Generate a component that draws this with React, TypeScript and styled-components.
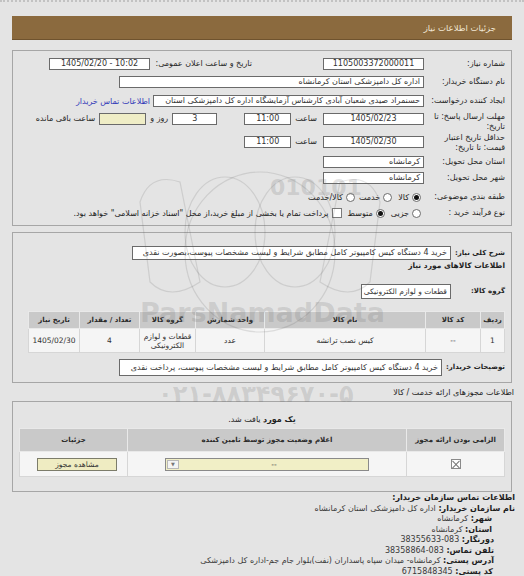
import React from 'react';
import styled, { createGlobalStyle } from 'styled-components';

const GlobalStyle = createGlobalStyle`
  html, body {
    margin: 0;
    padding: 0;
    background: #e4e4e4;
  }
  body {
    font-family: "DejaVu Sans", sans-serif;
    font-size: 8px;
    color: #222;
  }
`;

const Page = styled.div`
  position: relative;
  direction: rtl;
  width: 524px;
  height: 576px;
  overflow: hidden;
  box-sizing: border-box;
  padding: 0 12px;
  border-top: 2px dotted #c2c2c2;
`;

const HeaderBar = styled.div`
  margin-top: 14px;
  height: 24px;
  box-sizing: border-box;
  background: #8b6a3e;
  border-bottom: 1px solid #6f532e;
  color: #f1e7d4;
  font-size: 8.5px;
  display: flex;
  align-items: center;
  padding-right: 16px;
`;

const Panel = styled.div<{ $mt: number; $pt: number; $pb: number }>`
  margin-top: ${p => p.$mt}px;
  border: 1px solid #a6a6a6;
  padding: ${p => p.$pt}px 6px ${p => p.$pb}px 6px;
`;

const Row = styled.div<{ $h: number; $mt?: number; $top?: boolean }>`
  display: flex;
  align-items: ${p => (p.$top ? 'flex-start' : 'center')};
  height: ${p => p.$h}px;
  margin-top: ${p => p.$mt ?? 0}px;
`;

const Label = styled.div<{ $w?: number; $ms?: number; $pt?: number }>`
  flex: 0 0 ${p => (p.$w ? `${p.$w}px` : 'auto')};
  min-width: 0;
  margin-right: ${p => p.$ms ?? 0}px;
  padding-top: ${p => p.$pt ?? 0}px;
  line-height: 9.5px;
  white-space: nowrap;
  color: #262626;
`;

const BoldLabel = styled.div<{ $gap: number }>`
  flex: 0 0 auto;
  margin-left: ${p => p.$gap}px;
  font-weight: 700;
  font-size: 7px;
  white-space: nowrap;
  color: #1f1f1f;
`;

const Field = styled.div<{ $w?: number; $ms?: number; $ml?: number; $tint?: boolean; $ltr?: boolean; $right?: boolean; $h?: number; $mt?: number; $fs?: number }>`
  box-sizing: border-box;
  flex: ${p => (p.$w ? `0 0 ${p.$w}px` : '1 1 auto')};
  min-width: 0;
  height: ${p => p.$h ?? 12}px;
  margin-right: ${p => p.$ms ?? 0}px;
  margin-left: ${p => p.$ml ?? 0}px;
  margin-top: ${p => p.$mt ?? 0}px;
  border: 1px solid #6a6a6a;
  background: ${p => (p.$tint ? '#efedc6' : '#fff')};
  font-size: ${p => p.$fs ?? 8}px;
  line-height: ${p => (p.$h ?? 12) - 2}px;
  text-align: ${p => (p.$right ? 'right' : 'center')};
  direction: ${p => (p.$ltr ? 'ltr' : 'rtl')};
  padding: 0 3px;
  overflow: hidden;
  white-space: nowrap;
  color: #333;
`;

const LinkText = styled.a`
  margin-right: 3px;
  color: #3138b8;
  text-decoration: none;
  white-space: nowrap;
`;

const Choice = styled.label<{ $ms?: number }>`
  display: flex;
  align-items: center;
  gap: 3px;
  margin-right: ${p => p.$ms ?? 0}px;
  white-space: nowrap;
`;

const Radio = styled.span<{ $on?: boolean }>`
  box-sizing: border-box;
  width: 9px;
  height: 9px;
  border-radius: 50%;
  border: 1px solid #6c6c6c;
  background: #fff;
  display: inline-flex;
  align-items: center;
  justify-content: center;
  &::after {
    content: '';
    width: 5px;
    height: 5px;
    border-radius: 50%;
    background: ${p => (p.$on ? '#111' : 'transparent')};
  }
`;

const Check = styled.span`
  box-sizing: border-box;
  width: 10px;
  height: 10px;
  border: 1px solid #7a7a7a;
  background: #fff;
`;

const SectionTitle = styled.div<{ $h: number; $mt?: number; $bold?: boolean; $center?: boolean }>`
  height: ${p => p.$h}px;
  line-height: ${p => p.$h}px;
  margin-top: ${p => p.$mt ?? 0}px;
  font-weight: ${p => (p.$bold ? 700 : 400)};
  font-size: ${p => (p.$bold ? 7.5 : 8)}px;
  text-align: ${p => (p.$center ? 'center' : 'right')};
  white-space: nowrap;
`;

const OuterTitle = styled(SectionTitle)`
  margin-right: -2px;
`;

const Table = styled.table<{ $mt: number; $ml: number }>`
  border-collapse: collapse;
  margin-top: ${p => p.$mt}px;
  margin-left: ${p => p.$ml}px;
  width: calc(100% - ${p => p.$ml}px);
  table-layout: fixed;
  border: 1px solid #d6d6d6;
`;

const Th = styled.th<{ $w?: number; $h: number }>`
  width: ${p => (p.$w ? `${p.$w}px` : 'auto')};
  height: ${p => p.$h}px;
  padding: 0;
  background: #c9c9c9;
  border: 1px solid #e9e9e9;
  font-weight: 700;
  font-size: 7px;
  color: #2a2a2a;
  white-space: nowrap;
`;

const Td = styled.td<{ $h: number }>`
  height: ${p => p.$h}px;
  padding: 0 2px;
  background: #f5f5f5;
  border: 1px solid #d6d6d6;
  text-align: center;
  font-size: 7.5px;
  line-height: 9px;
  color: #333;
`;

const XBox = styled.span`
  display: inline-block;
  position: relative;
  width: 10px;
  height: 10px;
  box-sizing: border-box;
  border: 1px solid #8a8a8a;
  background: #fff;
  vertical-align: middle;
  &::before, &::after {
    content: '';
    position: absolute;
    left: -1px;
    top: 3.5px;
    width: 10px;
    height: 1px;
    background: #777;
    transform: rotate(45deg);
  }
  &::after {
    transform: rotate(-45deg);
  }
`;

const SelectBox = styled.div`
  display: flex;
  margin: 0 auto;
  width: 204px;
  height: 13px;
  box-sizing: border-box;
  border: 1px solid #8a8a8a;
  background: #f1efc6;
  direction: ltr;
`;

const SelectArrow = styled.span`
  flex: 0 0 10px;
  margin: 1px;
  border: 1px solid #b9b9b9;
  background: #f4f4f4;
  color: #777;
  font-size: 5px;
  display: flex;
  align-items: center;
  justify-content: center;
`;

const SelectValue = styled.span`
  flex: 1;
  text-align: center;
  line-height: 11px;
`;

const YellowButton = styled.div`
  margin: 0 auto 0 15px;
  width: 80px;
  height: 13px;
  line-height: 11px;
  box-sizing: border-box;
  border: 1px solid #7c7c6a;
  background: #efecc2;
  text-align: center;
  color: #333;
`;

const Footer = styled.div`
  margin-top: 1px;
  margin-right: -3px;
  line-height: 10.5px;
  color: #3a3a3a;
  b {
    color: #1e1e1e;
  }
`;

const FooterLine = styled.div<{ $indent?: number }>`
  padding-right: ${p => p.$indent ?? 0}px;
  white-space: nowrap;
`;

const Watermark = styled.div<{ $top: number; $left: number; $size: number }>`
  position: absolute;
  top: ${p => p.$top}px;
  left: ${p => p.$left}px;
  font-family: "DejaVu Sans", sans-serif;
  font-weight: 700;
  font-size: ${p => p.$size}px;
  color: rgba(110, 110, 110, 0.2);
  direction: ltr;
  pointer-events: none;
  white-space: nowrap;
`;

const LogoMark = styled.svg`
  position: absolute;
  top: 160px;
  left: 120px;
  pointer-events: none;
`;

export default function App() {
  return (
    <>
      <GlobalStyle />
      <Page>
        <HeaderBar>جزئیات اطلاعات نیاز</HeaderBar>

        <Panel $mt={10} $pt={6} $pb={5}>
          <Row $h={14}>
            <Label $w={81}>شماره نیاز:</Label>
            <Field $w={101} $ltr>1105003372000011</Field>
            <Label $w={99} $ms={71}>تاریخ و ساعت اعلان عمومی:</Label>
            <Field $w={101} $ms={3} $ltr>1405/02/20 - 10:02</Field>
          </Row>
          <Row $h={14} $mt={4}>
            <Label $w={81}>نام دستگاه خریدار:</Label>
            <Field $w={305} $right>اداره کل دامپزشکی استان کرمانشاه</Field>
          </Row>
          <Row $h={14} $mt={5}>
            <Label $w={81}>ایجاد کننده درخواست:</Label>
            <Field $w={271} $right>حسنمراد صیدی شعبان آبادی کارشناس آزمایشگاه اداره کل دامپزشکی استان</Field>
            <LinkText href="#">اطلاعات تماس خریدار</LinkText>
          </Row>
          <Row $h={20} $mt={3} $top>
            <Label $w={81} $pt={1}>مهلت ارسال پاسخ: تا<br />تاریخ:</Label>
            <Field $w={101} $mt={2} $ltr>1405/02/23</Field>
            <Label $ms={6} $pt={3}>ساعت</Label>
            <Field $w={47} $ms={4} $mt={2} $ltr>11:00</Field>
            <Field $w={45} $ms={27} $mt={2}>3</Field>
            <Label $ms={4} $pt={3}>روز و</Label>
            <Field $w={47} $ms={4} $mt={2} $tint />
            <Label $ms={4} $pt={3}>ساعت باقی مانده</Label>
          </Row>
          <Row $h={19} $mt={2} $top>
            <Label $w={81}>حداقل تاریخ اعتبار<br />قیمت: تا تاریخ:</Label>
            <Field $w={101} $mt={3} $ltr>1405/02/30</Field>
            <Label $ms={6} $pt={4}>ساعت</Label>
            <Field $w={47} $ms={4} $mt={3} $ltr>11:00</Field>
          </Row>
          <Row $h={14} $mt={3}>
            <Label $w={81}>استان محل تحویل:</Label>
            <Field $w={101} $right>کرمانشاه</Field>
          </Row>
          <Row $h={14} $mt={2}>
            <Label $w={81}>شهر محل تحویل:</Label>
            <Field $w={101} $right>کرمانشاه</Field>
          </Row>
          <Row $h={14} $mt={5}>
            <Label $w={84}>طبقه بندی موضوعی:</Label>
            <Choice><Radio $on />کالا</Choice>
            <Choice $ms={6}><Radio />خدمت</Choice>
            <Choice $ms={4}><Radio />کالا/خدمت</Choice>
          </Row>
          <Row $h={14} $mt={2}>
            <Label $w={84}>نوع فرآیند خرید :</Label>
            <Choice><Radio />جزیی</Choice>
            <Choice $ms={6}><Radio $on />متوسط</Choice>
            <Choice $ms={6}><Check />پرداخت تمام یا بخشی از مبلغ خرید،از محل "اسناد خزانه اسلامی" خواهد بود.</Choice>
          </Row>
        </Panel>

        <Panel $mt={6} $pt={13} $pb={6}>
          <Row $h={14}>
            <BoldLabel $gap={4}>شرح کلی نیاز:</BoldLabel>
            <Field $right $h={14} $ml={113}>خرید 4 دستگاه کیس کامپیوتر کامل مطابق شرایط و لیست مشخصات پیوست،بصورت نقدی</Field>
          </Row>
          <SectionTitle $h={12} $bold>اطلاعات کالاهای مورد نیاز</SectionTitle>
          <Row $h={16} $mt={11}>
            <BoldLabel $gap={20}>گروه کالا:</BoldLabel>
            <Field $w={90} $right $h={15} $fs={7.5}>قطعات و لوازم الکترونیکی</Field>
          </Row>
          <Table $mt={12} $ml={9}>
            <thead>
              <tr>
                <Th $w={23} $h={16}>ردیف</Th>
                <Th $w={54} $h={16}>کد کالا</Th>
                <Th $w={160} $h={16}>نام کالا</Th>
                <Th $w={68} $h={16}>واحد شمارش</Th>
                <Th $w={55} $h={16}>گروه کالا</Th>
                <Th $w={59} $h={16}>تعداد / مقدار</Th>
                <Th $h={16}>تاریخ نیاز</Th>
              </tr>
            </thead>
            <tbody>
              <tr>
                <Td $h={23}>1</Td>
                <Td $h={23}>--</Td>
                <Td $h={23}>کیس نصب ترانشه</Td>
                <Td $h={23}>عدد</Td>
                <Td $h={23}>قطعات و لوازم<br />الکترونیکی</Td>
                <Td $h={23}>4</Td>
                <Td $h={23}>1405/02/30</Td>
              </tr>
            </tbody>
          </Table>
          <Row $h={18} $mt={5}>
            <BoldLabel $gap={4}>توضیحات خریدار:</BoldLabel>
            <Field $right $h={17} $ml={100}>خرید 4 دستگاه کیس کامپیوتر کامل مطابق شرایط و لیست مشخصات پیوست، پرداخت نقدی</Field>
          </Row>
        </Panel>

        <OuterTitle $h={12} $mt={4}>اطلاعات مجوزهای ارائه خدمت / کالا</OuterTitle>

        <Panel $mt={2} $pt={12} $pb={14}>
          <SectionTitle $h={12} $center><b>یک مورد</b> یافت شد.</SectionTitle>
          <Table $mt={2} $ml={0}>
            <thead>
              <tr>
                <Th $w={97} $h={22}>الزامی بودن ارائه مجوز</Th>
                <Th $w={278} $h={22}>اعلام وضعیت مجوز توسط تامین کننده</Th>
                <Th $h={22}>جزئیات</Th>
              </tr>
            </thead>
            <tbody>
              <tr>
                <Td $h={24}><XBox /></Td>
                <Td $h={24}>
                  <SelectBox>
                    <SelectArrow>▼</SelectArrow>
                    <SelectValue>--</SelectValue>
                  </SelectBox>
                </Td>
                <Td $h={24}>
                  <YellowButton>مشاهده مجوز</YellowButton>
                </Td>
              </tr>
            </tbody>
          </Table>
        </Panel>

        <Footer>
          <FooterLine><b>اطلاعات تماس سازمان خریدار:</b></FooterLine>
          <FooterLine><b>نام سازمان خریدار:</b> اداره کل دامپزشکی استان کرمانشاه</FooterLine>
          <FooterLine $indent={23}><b>شهر:</b> کرمانشاه</FooterLine>
          <FooterLine $indent={23}><b>استان:</b> کرمانشاه</FooterLine>
          <FooterLine $indent={21}><b>دورنگار:</b> 083-38355633</FooterLine>
          <FooterLine $indent={21}><b>تلفن تماس:</b> 083-38358864</FooterLine>
          <FooterLine $indent={21}><b>آدرس پستی:</b> کرمانشاه- میدان سپاه پاسداران (نفت)بلوار جام جم-اداره کل دامپزشکی</FooterLine>
          <FooterLine $indent={22}><b>کد پستی:</b> 6715848345</FooterLine>
          <FooterLine $indent={21}><b>اطلاعات ایجاد کننده درخواست:</b></FooterLine>
        </Footer>

        <LogoMark width="280" height="200" viewBox="0 0 280 200">
          <g fill="none" stroke="rgba(90,90,90,0.16)" strokeWidth="1.2">
            <ellipse cx="140" cy="90" rx="75" ry="80" />
            <ellipse cx="105" cy="70" rx="40" ry="55" />
            <ellipse cx="175" cy="70" rx="40" ry="55" />
            <path d="M20 40 Q30 10 60 20 L80 120 Q50 140 30 120 Z" />
            <path d="M260 40 Q250 10 220 20 L200 120 Q230 140 250 120 Z" />
          </g>
        </LogoMark>
        <Watermark $top={173} $left={270} $size={22}>010101</Watermark>
        <Watermark $top={295} $left={140} $size={27}>ParsNamadData</Watermark>
        <Watermark $top={378} $left={158} $size={24}>۰۲۱-۸۸۳۴۹۶۷۰-۵</Watermark>
      </Page>
    </>
  );
}
